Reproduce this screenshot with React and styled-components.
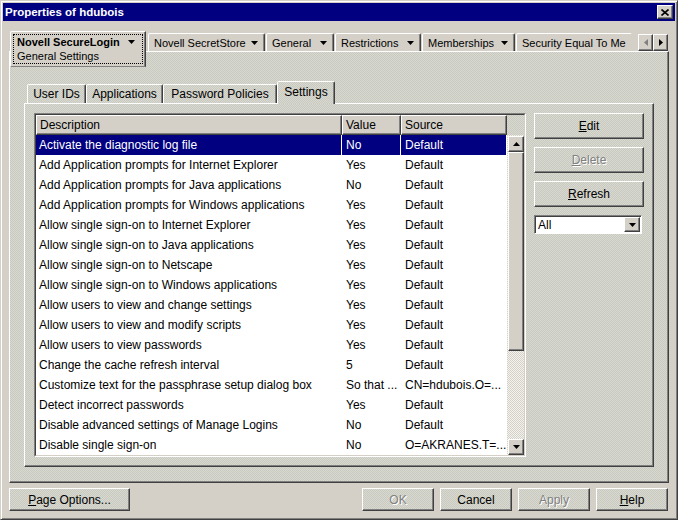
import React from "react";
import styled, { createGlobalStyle, css } from "styled-components";

const GlobalStyle = createGlobalStyle`
  html, body { margin: 0; padding: 0; background: #d4d0c8; }
  body { font-family: "Liberation Sans", Arial, sans-serif; font-size: 12px; color: #000; }
  * { box-sizing: border-box; }
`;

const dither = css`
  background-color: #d2d2ca;
  background-image: repeating-conic-gradient(#d9d9d1 0 25%, #c8cac0 0 50%);
  background-size: 2px 2px;
`;

const raised = css`
  border-style: solid;
  border-width: 1px;
  border-color: #ffffff #404040 #404040 #ffffff;
  box-shadow: inset -1px -1px #808080;
`;

const Window = styled.div`
  width: 678px;
  height: 520px;
  display: flex;
  flex-direction: column;
  background: #d4d0c8;
  border: 1px solid;
  border-color: #d4d0c8 #404040 #404040 #d4d0c8;
  box-shadow: inset 1px 1px #ffffff, inset -1px -1px #808080;
  padding: 2px;
`;

const TitleBar = styled.div`
  height: 18px;
  display: flex;
  align-items: center;
  justify-content: space-between;
  padding: 0 2px;
  background: #000080;
  color: #ffffff;
  font-weight: bold;
  font-size: 11.5px;
`;

const CloseButton = styled.div`
  width: 16px;
  height: 14px;
  background: #d4d0c8;
  ${raised};
  display: flex;
  align-items: center;
  justify-content: center;
`;

const Body = styled.div`
  flex: 1;
  display: flex;
  flex-direction: column;
  padding: 10px 6px 6px 6px;
`;

const TabStrip = styled.div`
  height: 20px;
  display: flex;
  align-items: flex-start;
  margin-left: 1px;
  margin-right: 1px;
  position: relative;
  z-index: 1;
  font-size: 11px;
`;

const BigTab = styled.div`
  width: 136px;
  height: 36px;
  padding: 2px;
  background: #d4d0c8;
  border-style: solid;
  border-width: 1px;
  border-color: #ffffff #404040 #808080 #ffffff;
  border-top-left-radius: 2px;
  box-shadow: inset -1px 0 #808080;
`;

const FocusBox = styled.div`
  height: 100%;
  border: 1px dotted #000;
  padding-left: 3px;
  display: flex;
  flex-direction: column;
`;

const TabLine = styled.div`
  height: 15px;
  display: flex;
  align-items: center;
  font-weight: ${(p) => (p.bold ? "bold" : "normal")};
  gap: 8px;
`;

const TopTab = styled.div`
  width: ${(p) => p.w}px;
  height: 18px;
  margin-top: 2px;
  margin-left: ${(p) => (p.first ? 2 : 1)}px;
  padding: 0 6px 0 5px;
  display: flex;
  align-items: center;
  justify-content: space-between;
  white-space: nowrap;
  overflow: hidden;
  background: #d4d0c8;
  border-style: solid;
  border-width: 1px 1px 0 1px;
  border-color: #ffffff ${(p) => (p.cut ? "transparent" : "#404040")} transparent #ffffff;
  border-top-left-radius: 2px;
  border-top-right-radius: 2px;
  box-shadow: ${(p) => (p.cut ? "none" : "inset -1px 0 #808080")};
`;

const TabScroll = styled.div`
  margin-left: auto;
  margin-top: 3px;
  display: flex;
`;

const ArrowButton = styled.div`
  width: 15px;
  height: 17px;
  background: #d4d0c8;
  ${raised};
  display: flex;
  align-items: center;
  justify-content: center;
`;

const Panel = styled.div`
  flex: 1;
  display: flex;
  flex-direction: column;
  ${dither};
  border-style: solid;
  border-width: 1px;
  border-color: #ffffff #404040 #404040 #ffffff;
  box-shadow: inset -1px -1px #808080;
  padding: 29px 14px 15px 14px;
`;

const InnerTabStrip = styled.div`
  height: 22px;
  display: flex;
  align-items: flex-end;
  padding-left: 3px;
  position: relative;
  z-index: 1;
`;

const InnerTab = styled.div`
  width: ${(p) => p.w}px;
  height: ${(p) => (p.active ? 23 : 19)}px;
  margin-bottom: ${(p) => (p.active ? -1 : 0)}px;
  display: flex;
  align-items: center;
  justify-content: center;
  padding-bottom: ${(p) => (p.active ? 3 : 0)}px;
  ${dither};
  border-style: solid;
  border-width: 1px 1px 0 1px;
  border-color: #ffffff #404040 transparent #ffffff;
  border-top-left-radius: 2px;
  border-top-right-radius: 2px;
  box-shadow: inset -1px 0 #808080;
`;

const InnerPane = styled.div`
  flex: 1;
  display: flex;
  gap: 8px;
  ${dither};
  border-style: solid;
  border-width: 1px;
  border-color: #ffffff #404040 #404040 #ffffff;
  box-shadow: inset -1px -1px #808080;
  padding: 9px;
`;

const TableOuter = styled.div`
  width: 492px;
  display: flex;
  border: 1px solid;
  border-color: #808080 #ffffff #ffffff #808080;
`;

const TableInner = styled.div`
  flex: 1;
  display: flex;
  flex-direction: column;
  border: 1px solid;
  border-color: #404040 #d4d0c8 #d4d0c8 #404040;
`;

const HeaderRow = styled.div`
  height: 20px;
  display: flex;
  flex-shrink: 0;
`;

const HeaderCell = styled.div`
  width: ${(p) => p.w}px;
  height: 20px;
  padding-left: 3px;
  display: flex;
  align-items: center;
  background: #d4d0c8;
  ${raised};
`;

const Corner = styled.div`
  flex: 1;
  ${dither};
`;

const TableBody = styled.div`
  flex: 1;
  display: flex;
  min-height: 0;
`;

const Rows = styled.div`
  flex: 1;
  background: #ffffff;
  overflow: hidden;
`;

const Row = styled.div`
  height: 20px;
  display: flex;
  background: ${(p) => (p.selected ? "#000080" : "#ffffff")};
  color: ${(p) => (p.selected ? "#ffffff" : "#000000")};
`;

const Cell = styled.div`
  width: ${(p) => p.w}px;
  padding-left: ${(p) => (p.first ? 3 : 4)}px;
  display: flex;
  align-items: center;
  white-space: nowrap;
  overflow: hidden;
  border-right: 1px solid #ffffff;
`;

const ScrollBar = styled.div`
  width: 17px;
  display: flex;
  flex-direction: column;
  padding: 1px 0 0 1px;
  background-color: #e8e8e0;
  background-image: repeating-conic-gradient(#f4f4ee 0 25%, #d4d0c8 0 50%);
  background-size: 2px 2px;
`;

const ScrollButton = styled.div`
  height: 16px;
  flex-shrink: 0;
  background: #d4d0c8;
  ${raised};
  display: flex;
  align-items: center;
  justify-content: center;
`;

const Thumb = styled.div`
  height: 199px;
  flex-shrink: 0;
  background: #d4d0c8;
  ${raised};
`;

const Track = styled.div`
  flex: 1;
`;

const SideColumn = styled.div`
  width: 110px;
  display: flex;
  flex-direction: column;
  gap: 8px;
  padding-top: 0;
`;

const Button = styled.div`
  width: ${(p) => p.w || 72}px;
  height: ${(p) => p.h || 23}px;
  flex-shrink: 0;
  display: flex;
  align-items: center;
  justify-content: center;
  ${dither};
  ${raised};
  color: ${(p) => (p.disabled ? "#808080" : "#000000")};
  text-shadow: ${(p) => (p.disabled ? "1px 1px #ffffff" : "none")};
`;

const Select = styled.div`
  width: 108px;
  height: 19px;
  display: flex;
  align-items: center;
  background: #ffffff;
  border: 1px solid;
  border-color: #808080 #ffffff #ffffff #808080;
  box-shadow: inset 1px 1px #404040;
  padding: 1px 1px 1px 2px;
`;

const SelectText = styled.div`
  flex: 1;
  padding-left: 1px;
`;

const SelectButton = styled.div`
  width: 16px;
  height: 15px;
  background: #d4d0c8;
  ${raised};
  display: flex;
  align-items: center;
  justify-content: center;
`;

const Footer = styled.div`
  margin-top: 5px;
  height: 23px;
  display: flex;
  justify-content: space-between;
  margin-right: 1px;
`;

const ButtonGroup = styled.div`
  display: flex;
  gap: 6px;
`;

function Arrow({ dir = "down", color = "#000" }) {
  const pts = {
    down: "0,0 7,0 3.5,4",
    up: "0,4 7,4 3.5,0",
    left: "4,0 4,7 0,3.5",
    right: "0,0 0,7 4,3.5",
  }[dir];
  const vertical = dir === "down" || dir === "up";
  return (
    <svg width={vertical ? 7 : 4} height={vertical ? 4 : 7} viewBox={vertical ? "0 0 7 4" : "0 0 4 7"}>
      <polygon points={pts} fill={color} />
    </svg>
  );
}

const rows = [
  ["Activate the diagnostic log file", "No", "Default"],
  ["Add Application prompts for Internet Explorer", "Yes", "Default"],
  ["Add Application prompts for Java applications", "No", "Default"],
  ["Add Application prompts for Windows applications", "Yes", "Default"],
  ["Allow single sign-on to Internet Explorer", "Yes", "Default"],
  ["Allow single sign-on to Java applications", "Yes", "Default"],
  ["Allow single sign-on to Netscape", "Yes", "Default"],
  ["Allow single sign-on to Windows applications", "Yes", "Default"],
  ["Allow users to view and change settings", "Yes", "Default"],
  ["Allow users to view and modify scripts", "Yes", "Default"],
  ["Allow users to view passwords", "Yes", "Default"],
  ["Change the cache refresh interval", "5", "Default"],
  ["Customize text for the passphrase setup dialog box", "So that ...", "CN=hdubois.O=..."],
  ["Detect incorrect passwords", "Yes", "Default"],
  ["Disable advanced settings of Manage Logins", "No", "Default"],
  ["Disable single sign-on", "No", "O=AKRANES.T=..."],
];

const cols = [306, 59, 106];

const topTabs = [
  { label: "Novell SecretStore", w: 117 },
  { label: "General", w: 68 },
  { label: "Restrictions", w: 86 },
  { label: "Memberships", w: 93 },
];

export default function App() {
  return (
    <>
      <GlobalStyle />
      <Window>
        <TitleBar>
          <span>Properties of hdubois</span>
          <CloseButton>
            <svg width="8" height="7" viewBox="0 0 8 7">
              <path d="M0.5 0.5 L7.5 6.5 M7.5 0.5 L0.5 6.5" stroke="#000" strokeWidth="1.6" />
            </svg>
          </CloseButton>
        </TitleBar>
        <Body>
          <TabStrip>
            <BigTab>
              <FocusBox>
                <TabLine bold>
                  Novell SecureLogin <Arrow />
                </TabLine>
                <TabLine>General Settings</TabLine>
              </FocusBox>
            </BigTab>
            {topTabs.map((t, i) => (
              <TopTab key={t.label} w={t.w} first={i === 0}>
                <span>{t.label}</span>
                <Arrow />
              </TopTab>
            ))}
            <TopTab w={116} cut>
              <span>Security Equal To Me</span>
              <svg width="5" height="16" viewBox="0 0 5 16">
                <path d="M4 0 L1 3 L3 6 L1 9 L3 12 L1 16" stroke="#a0a0a0" fill="none" strokeWidth="1" />
              </svg>
            </TopTab>
            <TabScroll>
              <ArrowButton>
                <Arrow dir="left" color="#808080" />
              </ArrowButton>
              <ArrowButton>
                <Arrow dir="right" />
              </ArrowButton>
            </TabScroll>
          </TabStrip>
          <Panel>
            <InnerTabStrip>
              <InnerTab w={59}>User IDs</InnerTab>
              <InnerTab w={77}>Applications</InnerTab>
              <InnerTab w={114}>Password Policies</InnerTab>
              <InnerTab w={58} active>
                Settings
              </InnerTab>
            </InnerTabStrip>
            <InnerPane>
              <TableOuter>
                <TableInner>
                  <HeaderRow>
                    <HeaderCell w={cols[0]}>Description</HeaderCell>
                    <HeaderCell w={cols[1]}>Value</HeaderCell>
                    <HeaderCell w={cols[2]}>Source</HeaderCell>
                    <Corner />
                  </HeaderRow>
                  <TableBody>
                    <Rows>
                      {rows.map((r, i) => (
                        <Row key={r[0]} selected={i === 0}>
                          <Cell w={cols[0]} first>
                            {r[0]}
                          </Cell>
                          <Cell w={cols[1]}>{r[1]}</Cell>
                          <Cell w={cols[2]}>{r[2]}</Cell>
                        </Row>
                      ))}
                    </Rows>
                    <ScrollBar>
                      <ScrollButton>
                        <Arrow dir="up" />
                      </ScrollButton>
                      <Thumb />
                      <Track />
                      <ScrollButton>
                        <Arrow dir="down" />
                      </ScrollButton>
                    </ScrollBar>
                  </TableBody>
                </TableInner>
              </TableOuter>
              <SideColumn>
                <Button w={110} h={26}>
                  <u>E</u>dit
                </Button>
                <Button w={110} h={26} disabled>
                  <u>D</u>elete
                </Button>
                <Button w={110} h={26}>
                  <u>R</u>efresh
                </Button>
                <Select>
                  <SelectText>All</SelectText>
                  <SelectButton>
                    <Arrow />
                  </SelectButton>
                </Select>
              </SideColumn>
            </InnerPane>
          </Panel>
          <Footer>
            <Button w={121}>
              <u>P</u>age Options...
            </Button>
            <ButtonGroup>
              <Button disabled>OK</Button>
              <Button>Cancel</Button>
              <Button disabled>Apply</Button>
              <Button>
                <u>H</u>elp
              </Button>
            </ButtonGroup>
          </Footer>
        </Body>
      </Window>
    </>
  );
}
